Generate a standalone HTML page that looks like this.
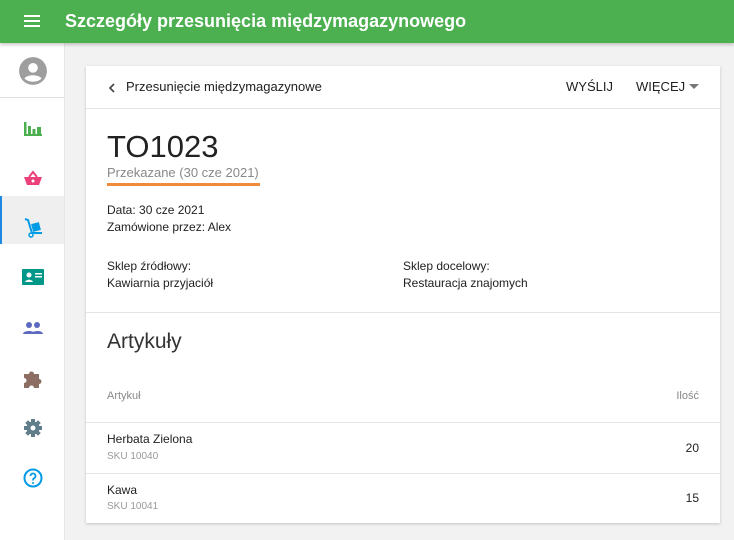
<!DOCTYPE html>
<html><head><meta charset="utf-8"><style>
*{margin:0;padding:0;box-sizing:border-box}
body{width:734px;height:540px;background:#f2f2f2;font-family:"Liberation Sans",sans-serif;position:relative;overflow:hidden;color:#212121}
.top{position:absolute;left:0;top:0;width:734px;height:43px;background:#4caf50;box-shadow:0 2px 3px rgba(0,0,0,.2);z-index:2}
.top .t{position:absolute;left:65px;top:11px;color:#fff;font-size:18px;font-weight:bold}
.side{position:absolute;left:0;top:43px;width:65px;height:497px;background:#fff;border-right:1px solid #e6e6e6}
.ic{position:absolute;left:20px;width:26px;height:26px}
.card{position:absolute;left:86px;top:66px;width:634px;height:457px;background:#fff;box-shadow:0 1px 3px rgba(0,0,0,.2)}
.a{position:absolute;white-space:nowrap}
.ln{position:absolute;left:0;width:634px;height:1px;background:#e4e4e4}
.s13{font-size:12px}
</style></head><body>
<div class="top">
<svg style="position:absolute;left:24px;top:14px" width="16" height="14"><rect y="1" width="16" height="2" fill="#fff"/><rect y="6" width="16" height="2" fill="#fff"/><rect y="11" width="16" height="2" fill="#fff"/></svg>
<div class="t">Szczegóły przesunięcia międzymagazynowego</div></div>
<div class="side">
<svg class="ic" style="top:13px;left:18px;width:30px;height:30px" viewBox="0 0 28 28"><circle cx="14" cy="14" r="13" fill="#9e9e9e"/><circle cx="14" cy="11" r="4.5" fill="#fff"/><path d="M6 21c3-4 13-4 16 0c-2 2-5 3-8 3s-6-1-8-3z" fill="#fff"/></svg>
<div style="position:absolute;left:0;top:54px;width:64px;height:1px;background:#e0e0e0"></div>
<svg class="ic" style="top:73px" viewBox="0 0 26 26"><g fill="#4caf50"><rect x="4" y="6" width="2.5" height="14"/><rect x="4" y="18" width="18" height="2"/><rect x="8" y="10" width="3" height="9"/><rect x="12.5" y="13" width="3" height="6"/><rect x="17" y="11" width="4" height="8"/></g></svg>
<svg class="ic" style="top:122px" viewBox="0 0 26 26"><path d="M9 12l4-5 4 5" stroke="#ec407a" stroke-width="2" fill="none"/><path d="M4 12h18l-3 8H7z" fill="#ec407a"/><circle cx="13" cy="16" r="1.5" fill="#fff"/></svg>
<div style="position:absolute;left:0;top:153px;width:64px;height:48px;background:#efefef;border-left:2px solid #1e88e5"></div>
<svg class="ic" style="top:171px" viewBox="0 0 26 26"><path d="M5 5l3 1 4 13h10" stroke="#039be5" stroke-width="2" fill="none"/><circle cx="11" cy="21" r="2" fill="none" stroke="#039be5" stroke-width="1.5"/><rect x="12" y="9" width="8" height="8" fill="#039be5" transform="rotate(-15 16 13)"/></svg>
<svg class="ic" style="top:221px" viewBox="0 0 26 26"><rect x="2" y="5" width="22" height="16" rx="1" fill="#009688"/><circle cx="9" cy="11" r="2.5" fill="#fff"/><path d="M5 18c1-3 7-3 8 0z" fill="#fff"/><rect x="15" y="9" width="7" height="1.5" fill="#fff"/><rect x="15" y="12" width="7" height="1.5" fill="#fff"/></svg>
<svg class="ic" style="top:272px" viewBox="0 0 26 26"><g fill="#5c6bc0"><circle cx="9" cy="10" r="3"/><circle cx="17" cy="10" r="3"/><path d="M3 19c0-4 12-4 12 0z"/><path d="M12 19c0-4 11-4 11 0z"/></g></svg>
<svg class="ic" style="top:322px" viewBox="0 0 26 26"><path d="M4 9h5a2.5 2.5 0 1 1 5 0h5v5a2.5 2.5 0 1 1 0 5v4h-5a2.5 2.5 0 1 0-5 0H4v-5a2.5 2.5 0 1 0 0-5z" fill="#8d6e63"/></svg>
<svg class="ic" style="top:372px" viewBox="0 0 26 26"><g fill="#607d8b" transform="translate(13 13)"><rect x="-2" y="-9" width="4" height="18"/><rect x="-2" y="-9" width="4" height="18" transform="rotate(45)"/><rect x="-2" y="-9" width="4" height="18" transform="rotate(90)"/><rect x="-2" y="-9" width="4" height="18" transform="rotate(135)"/><circle r="6.5"/></g><circle cx="13" cy="13" r="2.5" fill="#fff"/></svg>
<svg class="ic" style="top:422px" viewBox="0 0 26 26"><circle cx="13" cy="13" r="8.5" fill="none" stroke="#039be5" stroke-width="2"/><path d="M10.5 11a2.5 2.5 0 1 1 3.5 2.3c-1 .5-1 1-1 2.2" fill="none" stroke="#039be5" stroke-width="1.8"/><circle cx="13" cy="18" r="1" fill="#039be5"/></svg>
</div>
<div class="card">
<svg class="a" style="left:21px;top:16px" width="10" height="12"><path d="M7 2L3 6l4 4" stroke="#444" stroke-width="1.6" fill="none"/></svg>
<div class="a" style="left:40px;top:13px;font-size:13px">Przesunięcie międzymagazynowe</div>
<div class="a" style="left:480px;top:13px;font-size:13px">WYŚLIJ</div>
<div class="a" style="left:550px;top:13px;font-size:13px">WIĘCEJ</div>
<svg class="a" style="left:603px;top:18px" width="10" height="6"><path d="M0 0h10L5 5z" fill="#777"/></svg>
<div class="ln" style="top:42px"></div>
<div class="a" style="left:21px;top:63px;font-size:31px;color:#222">TO1023</div>
<div class="a" style="left:21px;top:99px;font-size:13px;color:#888">Przekazane (30 cze 2021)</div>
<div class="a" style="left:21px;top:117px;width:153px;height:3px;background:#f08a3c"></div>
<div class="a s13" style="left:21px;top:137px">Data: 30 cze 2021</div>
<div class="a s13" style="left:21px;top:154px">Zamówione przez: Alex</div>
<div class="a s13" style="left:21px;top:193px">Sklep źródłowy:</div>
<div class="a s13" style="left:21px;top:210px">Kawiarnia przyjaciół</div>
<div class="a s13" style="left:317px;top:193px">Sklep docelowy:</div>
<div class="a s13" style="left:317px;top:210px">Restauracja znajomych</div>
<div class="ln" style="top:246px"></div>
<div class="a" style="left:21px;top:264px;font-size:21px;color:#333">Artykuły</div>
<div class="a" style="left:21px;top:324px;font-size:11px;color:#888">Artykuł</div>
<div class="a" style="right:21px;top:324px;font-size:11px;color:#888">Ilość</div>
<div class="ln" style="top:356px"></div>
<div class="a s13" style="left:21px;top:366px">Herbata Zielona</div>
<div class="a" style="left:21px;top:385px;font-size:10px;color:#999">SKU 10040</div>
<div class="a s13" style="right:21px;top:375px">20</div>
<div class="ln" style="top:407px"></div>
<div class="a s13" style="left:21px;top:417px">Kawa</div>
<div class="a" style="left:21px;top:435px;font-size:10px;color:#999">SKU 10041</div>
<div class="a s13" style="right:21px;top:425px">15</div>
</div>
</body></html>
